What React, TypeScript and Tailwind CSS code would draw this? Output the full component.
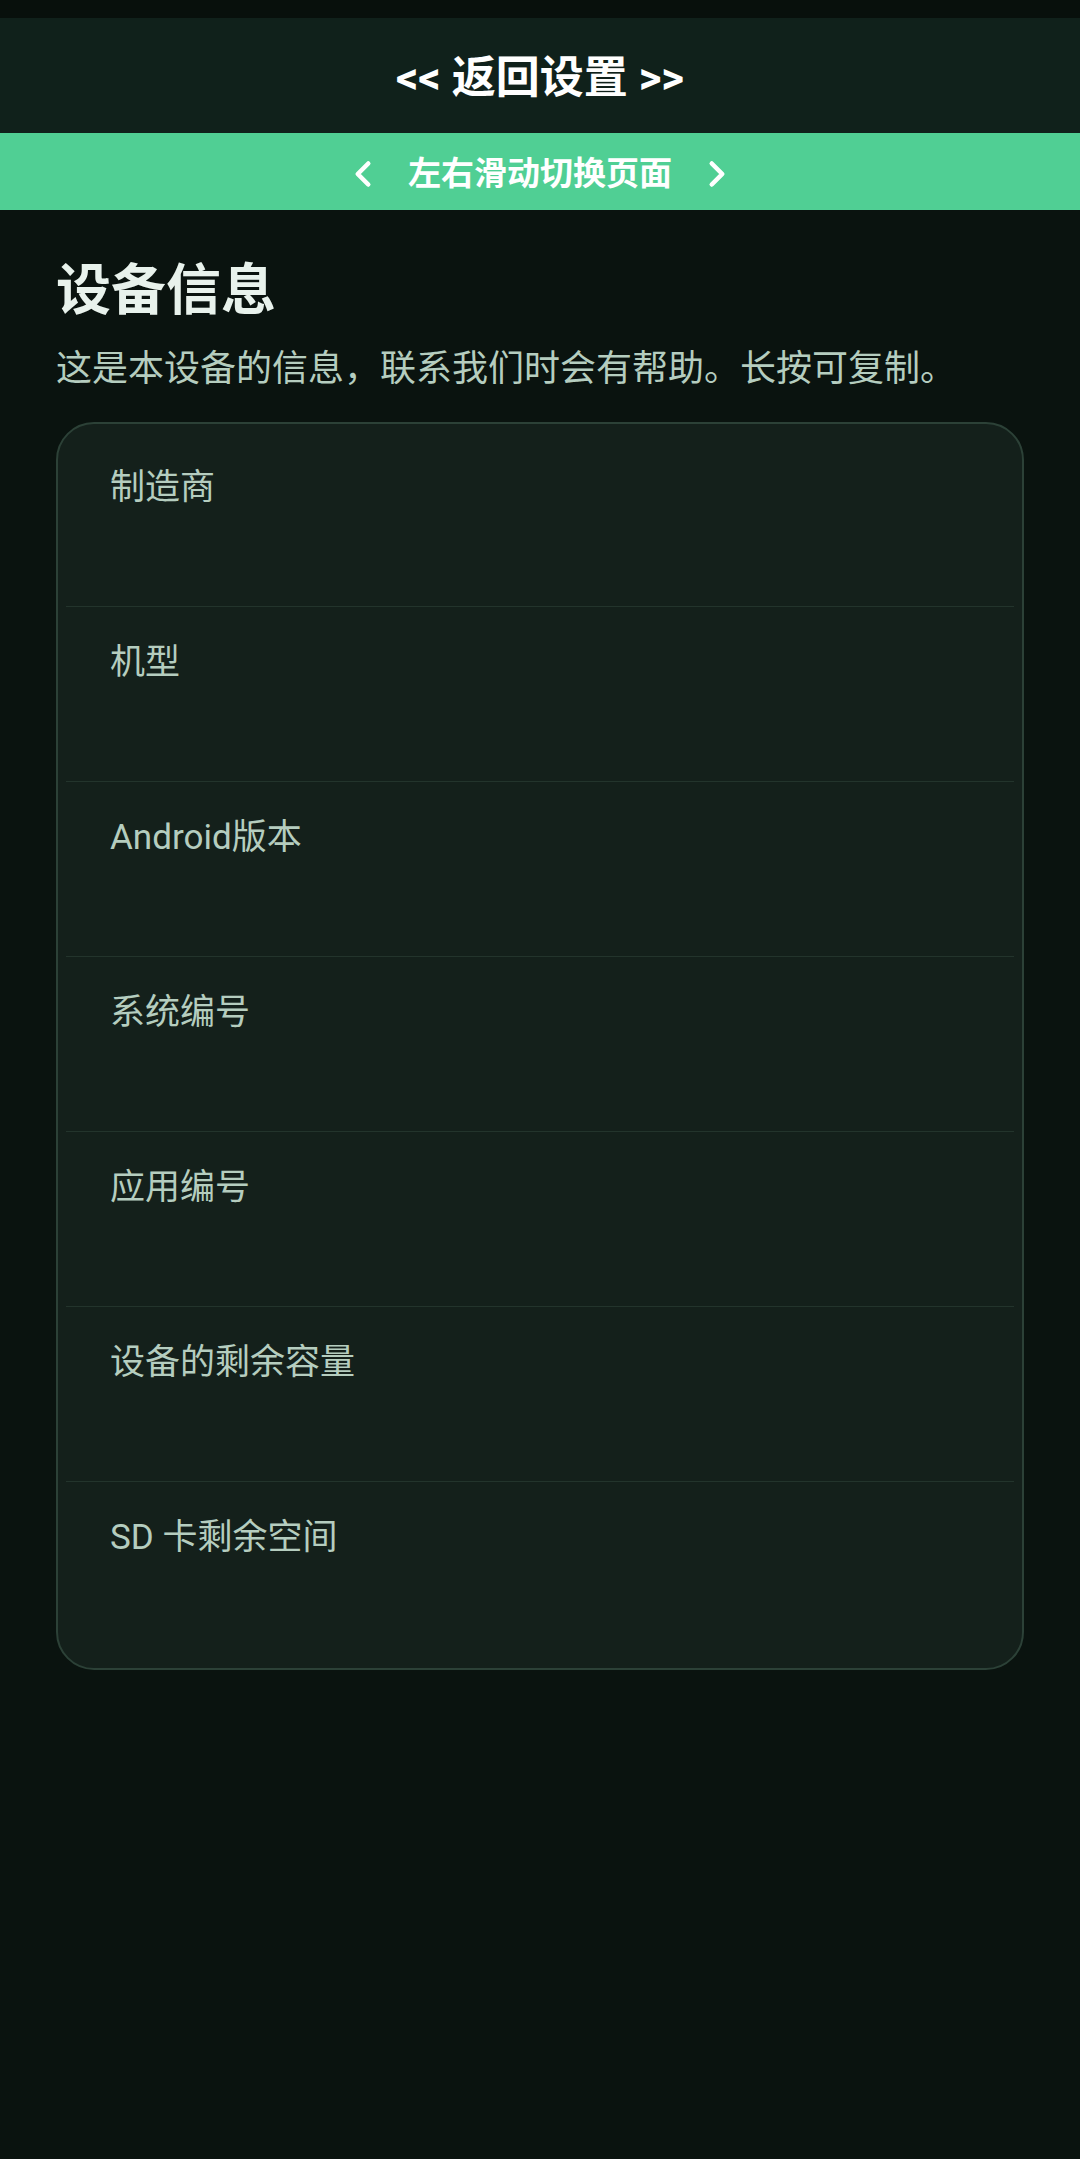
import { ChevronLeft, ChevronRight } from 'lucide-react';

const rows = ['制造商', '机型', 'Android版本', '系统编号', '应用编号', '设备的剩余容量', 'SD 卡剩余空间'];

export default function App() {
  return (
    <div
      className="min-h-[2159px] w-[1080px] bg-[#0a130f]"
      style={{ fontFamily: 'Roboto, "Noto Sans CJK SC", sans-serif' }}
    >
      {/* status bar */}
      <div className="h-[18px] bg-[#08100c]" />

      {/* header */}
      <div className="flex h-[115px] items-center justify-center bg-[#10211b] pt-[4px]">
        <span className="text-[44px] font-bold leading-none text-white">&lt;&lt; 返回设置 &gt;&gt;</span>
      </div>

      {/* swipe hint */}
      <div className="flex h-[77px] items-center justify-center gap-6 bg-[#50cf94] pt-[4px] text-white">
        <ChevronLeft size={42} strokeWidth={2.6} />
        <span className="text-[33px] font-bold leading-none">左右滑动切换页面</span>
        <ChevronRight size={42} strokeWidth={2.6} />
      </div>

      <div className="px-14 pt-[40px]">
        <h1 className="text-[55px] font-bold leading-[81px] text-[#e8f2ec]">设备信息</h1>
        <p className="mt-[11px] text-[36px] leading-[54px] text-[#b5cdbf]">
          这是本设备的信息，联系我们时会有帮助。长按可复制。
        </p>

        <div className="mt-[26px] rounded-[38px] border-2 border-[#2c4137] bg-[#14201b] px-[8px] pt-[8px] pb-[12px]">
          {rows.map((label, i) => (
            <div key={label} className={i > 0 ? 'border-t border-[#23342c]' : ''}>
              <div className="px-[44px] pt-[30px] pb-[30px]">
                <div className="text-[35px] leading-[52px] text-[#b5cdbf]">{label}</div>
                <div className="mt-[10px] h-[52px]" />
              </div>
            </div>
          ))}
        </div>
      </div>
    </div>
  );
}
